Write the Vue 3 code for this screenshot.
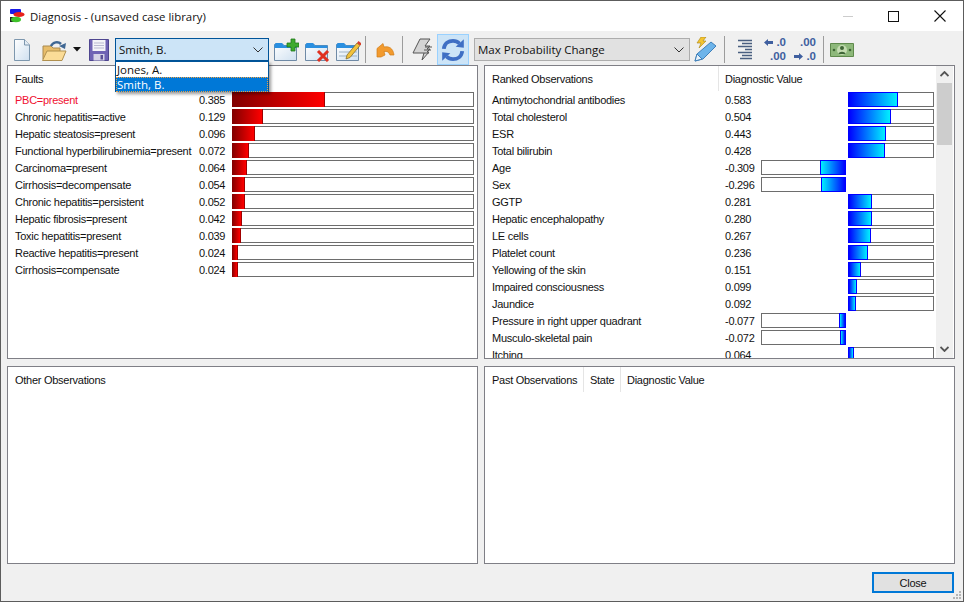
<script setup>
const faults = [
  { name: 'PBC=present', value: 0.385, hit: true },
  { name: 'Chronic hepatitis=active', value: 0.129 },
  { name: 'Hepatic steatosis=present', value: 0.096 },
  { name: 'Functional hyperbilirubinemia=present', value: 0.072 },
  { name: 'Carcinoma=present', value: 0.064 },
  { name: 'Cirrhosis=decompensate', value: 0.054 },
  { name: 'Chronic hepatitis=persistent', value: 0.052 },
  { name: 'Hepatic fibrosis=present', value: 0.042 },
  { name: 'Toxic hepatitis=present', value: 0.039 },
  { name: 'Reactive hepatitis=present', value: 0.024 },
  { name: 'Cirrhosis=compensate', value: 0.024 },
]

const ranked = [
  { name: 'Antimytochondrial antibodies', value: 0.583 },
  { name: 'Total cholesterol', value: 0.504 },
  { name: 'ESR', value: 0.443 },
  { name: 'Total bilirubin', value: 0.428 },
  { name: 'Age', value: -0.309 },
  { name: 'Sex', value: -0.296 },
  { name: 'GGTP', value: 0.281 },
  { name: 'Hepatic encephalopathy', value: 0.28 },
  { name: 'LE cells', value: 0.267 },
  { name: 'Platelet count', value: 0.236 },
  { name: 'Yellowing of the skin', value: 0.151 },
  { name: 'Impaired consciousness', value: 0.099 },
  { name: 'Jaundice', value: 0.092 },
  { name: 'Pressure in right upper quadrant', value: -0.077 },
  { name: 'Musculo-skeletal pain', value: -0.072 },
  { name: 'Itching', value: 0.064 },
]

const fmt = (v) => v.toFixed(3)
const px = (v, full) => Math.round(Math.abs(v) * full) + 'px'
</script>

<template>
  <div class="window">
    <div class="titlebar">
      <svg class="appicon" width="16" height="15" viewBox="0 0 16 15">
        <path d="M1 8h8v5H1z" fill="#222" />
        <rect x="1" y="0" width="11" height="5" rx="1" fill="#1a1ae6" />
        <ellipse cx="10" cy="5.500" rx="5.500" ry="2.500" fill="#e8201c" />
        <ellipse cx="7" cy="10.500" rx="5" ry="2.800" fill="#3fc22a" />
      </svg>
      <span class="title">Diagnosis - (unsaved case library)</span>
      <div class="winbtns">
        <span class="winmin"></span>
        <span class="winmax"></span>
        <svg width="12" height="12" viewBox="0 0 12 12"><path d="M.5.500l11 11M11.500.500l-11 11" stroke="#111" stroke-width="1.100" fill="none" /></svg>
      </div>
    </div>

    <div class="toolbar">
      <svg class="i-new" width="20" height="24" viewBox="0 0 20 24">
        <defs><linearGradient id="paper" x1="0" y1="0" x2="1" y2="1"><stop offset="0" stop-color="#fff" /><stop offset="1" stop-color="#cfe0f0" /></linearGradient></defs>
        <path d="M2.500 1.500h10l5 5.500v15.500h-15z" fill="url(#paper)" stroke="#7d97ae" />
        <path d="M12.500 1.500v5.500h5" fill="#e4edf5" stroke="#7d97ae" />
      </svg>
      <svg class="i-open" width="26" height="24" viewBox="0 0 26 24">
        <path d="M2 8h8l2 2h7v11H2z" fill="#e8bd6a" stroke="#a98a4e" />
        <path d="M6 13h19l-4 9.500H1.500z" fill="#fbdc97" stroke="#b0904f" />
        <path d="M10 8c2-4 7-5 10-2" fill="none" stroke="#3f6793" stroke-width="2.500" />
        <path d="M18 8l7-3-1 6z" fill="#3f6793" />
      </svg>
      <svg class="i-drop" width="8" height="5" viewBox="0 0 8 5"><path d="M0 0h8L4 4.500z" fill="#111" /></svg>
      <svg class="i-save" width="22" height="24" viewBox="0 0 22 24">
        <path d="M1.500 1.500h19v21h-19z" fill="#6f63b4" stroke="#4f4690" />
        <path d="M4.500 2h13v11h-13z" fill="#f4f4f8" />
        <path d="M6 5h10M6 7.500h10M6 10h10" stroke="#b9b9d0" />
        <path d="M5.500 16h11v6.500h-11z" fill="#d5d3e6" />
        <path d="M12.500 17h2.500v4.500h-2.500z" fill="#5a5096" />
      </svg>

      <div class="combo combo-name">
        <span>Smith, B.</span>
        <svg width="10" height="6" viewBox="0 0 10 6"><path d="M.5.500L5 5 9.500.5" fill="none" stroke="#333" /></svg>
        <div class="menu">
          <div class="opt">Jones, A.</div>
          <div class="opt sel">Smith, B.</div>
        </div>
      </div>

      <svg class="i-add" width="26" height="24" viewBox="0 0 26 24">
        <path d="M1.500 6.500v16h22v-15H11l-2-2H3z" fill="url(#paper)" stroke="#6f8aa6" />
        <path d="M1.500 10V6.500l1.500-1.500h6l2 2.500h12.500V10z" fill="#2a8fe0" />
        <path d="M18 1h4v4h4v4h-4v4h-4V9h-4V5h4z" fill="#3eaa2e" stroke="#1f7a1b" stroke-width=".8" />
      </svg>
      <svg class="i-del" width="26" height="24" viewBox="0 0 26 24">
        <path d="M1.500 6.500v16h22v-15H11l-2-2H3z" fill="url(#paper)" stroke="#6f8aa6" />
        <path d="M1.500 10V6.500l1.500-1.500h6l2 2.500h12.500V10z" fill="#2a8fe0" />
        <path d="M14 13l10 10M24 13L14 23" stroke="#e03020" stroke-width="3" fill="none" />
      </svg>
      <svg class="i-edit" width="26" height="24" viewBox="0 0 26 24">
        <path d="M1.500 6.500v16h22v-15H11l-2-2H3z" fill="url(#paper)" stroke="#6f8aa6" />
        <path d="M1.500 10V6.500l1.500-1.500h6l2 2.500h12.500V10z" fill="#2a8fe0" />
        <path d="M4 14h18M4 18h18" stroke="#9fb3c6" />
        <path d="M12 17l10-12 3 2.500-10 12-4 1.500z" fill="#f2c23c" stroke="#7a6320" stroke-width=".7" />
        <path d="M22 5l1.500-2 3 2.500-1.500 2z" fill="#d8402c" />
      </svg>
      <span class="sep sep-a"></span>
      <svg class="i-undo" width="20" height="18" viewBox="0 0 20 18">
        <path d="M2 16V7.500l6-5 1 3.500c5-1 9 1 10 8h-4c-1-3-3-4-6-3.500l1 3.500L6 16z" fill="#f29a2e" stroke="#d07c18" stroke-width=".7" />
      </svg>
      <span class="sep sep-b"></span>
      <svg class="i-bolt" width="24" height="24" viewBox="0 0 24 24">
        <path d="M10 1h10l-5 7h5l-3 3h3l-3 3h2l-7 8 2-7H3z" fill="#d4d4d4" stroke="#555" />
        <path d="M15 9h7M14 12h7M14 15h5" stroke="#555" />
      </svg>
      <div class="toggle">
        <svg width="26" height="26" viewBox="0 0 24 24">
          <path d="M3.500 11C4 6 8 3.500 12 3.500c2.500 0 4.500 1 6 2.500" fill="none" stroke="#3f6fc4" stroke-width="3.500" />
          <path d="M14.500 9l7.500 1V2z" fill="#3f6fc4" />
          <path d="M20.500 13C20 18 16 20.500 12 20.500c-2.500 0-4.500-1-6-2.500" fill="none" stroke="#3f6fc4" stroke-width="3.500" />
          <path d="M9.500 15L2 14v8z" fill="#3f6fc4" />
        </svg>
      </div>

      <div class="combo combo-mode">
        <span>Max Probability Change</span>
        <svg width="10" height="6" viewBox="0 0 10 6"><path d="M.5.500L5 5 9.500.5" fill="none" stroke="#333" /></svg>
      </div>

      <svg class="i-wand" width="26" height="26" viewBox="0 0 26 26">
        <path d="M2 24l2-7L18 5l5 4-13 13z" fill="#6db4ea" stroke="#3f7fb8" />
        <path d="M2 24l2-7 5 5z" fill="#e8f2fa" stroke="#3f7fb8" />
        <path d="M8 0h5l-3 4h3l-7 7 2-5H4z" fill="#f4c430" stroke="#a88418" stroke-width=".6" />
      </svg>
      <span class="sep sep-c"></span>
      <svg class="i-align" width="18" height="24" viewBox="0 0 18 24">
        <path d="M2 2.500h14M6 5.500h10M2 8.500h14M9 11.500h7M2 14.500h14M6 17.500h10M4 20.500h12" stroke="#4a5f80" stroke-width="1.600" />
      </svg>
      <div class="dec">
        <div class="dec-line">
          <svg class="dec-arrow" width="9" height="7" viewBox="0 0 9 7"><path d="M0 3.500L4 0v2h5v3H4v2z" fill="#3f5f9f" /></svg>
          <span>.0</span>
        </div>
        <div class="dec-line"><span>.00</span></div>
      </div>
      <div class="dec inc">
        <div class="dec-line"><span>.00</span></div>
        <div class="dec-line">
          <svg class="dec-arrow" width="9" height="7" viewBox="0 0 9 7"><path d="M9 3.500L5 0v2H0v3h5v2z" fill="#3f5f9f" /></svg>
          <span>.0</span>
        </div>
      </div>
      <span class="sep sep-d"></span>
      <svg class="i-money" width="24" height="14" viewBox="0 0 24 14">
        <path d="M.5.500h23v13H.5z" fill="#8db87a" stroke="#5f8a4c" />
        <circle cx="12" cy="7" r="5" fill="#c3dcb0" />
        <circle cx="12" cy="5" r="2" fill="#3f6636" />
        <path d="M8.500 11c.5-3 6.500-3 7 0z" fill="#3f6636" />
        <circle cx="4" cy="7" r="1.300" fill="#3f6636" />
        <circle cx="20" cy="7" r="1.300" fill="#3f6636" />
      </svg>
    </div>

    <div class="panels">
      <section class="panel">
        <header class="head"><span class="cell cell-faults">Faults</span></header>
        <div class="rows">
          <div v-for="f in faults" :key="f.name" class="fault">
            <span class="fname" :class="{ hit: f.hit }">{{ f.name }}</span>
            <span class="fvalue">{{ fmt(f.value) }}</span>
            <div class="bar fault-bar">
              <div class="fill red" :style="{ width: px(f.value, 241) }"></div>
              <div class="rest"></div>
            </div>
          </div>
        </div>
      </section>

      <section class="panel panel-scroll">
        <div class="listwrap">
          <header class="head">
            <span class="cell cell-ranked">Ranked Observations</span>
            <span class="cell cell-diag">Diagnostic Value</span>
          </header>
          <div class="rows">
            <div v-for="r in ranked" :key="r.name" class="obs">
              <span>{{ r.name }}</span>
              <span>{{ fmt(r.value) }}</span>
              <div class="bar neg">
                <template v-if="r.value < 0">
                  <div class="rest rest-left"></div>
                  <div class="fill cyan" :style="{ width: px(r.value, 85) }"></div>
                </template>
              </div>
              <div class="bar pos">
                <template v-if="r.value > 0">
                  <div class="fill blue" :style="{ width: px(r.value, 86) }"></div>
                  <div class="rest"></div>
                </template>
              </div>
            </div>
          </div>
        </div>
        <div class="scrollbar">
          <svg class="chev" width="9" height="6" viewBox="0 0 9 6"><path d="M.5 5L4.500 1l4 4" fill="none" stroke="#555" stroke-width="1.800" /></svg>
          <div class="thumb"></div>
          <svg class="chev chev-down" width="9" height="6" viewBox="0 0 9 6"><path d="M.5 1l4 4 4-4" fill="none" stroke="#555" stroke-width="1.800" /></svg>
        </div>
      </section>

      <section class="panel">
        <header class="head"><span class="cell cell-faults">Other Observations</span></header>
      </section>

      <section class="panel">
        <header class="head">
          <span class="cell cell-past">Past Observations</span>
          <span class="cell cell-state">State</span>
          <span class="cell">Diagnostic Value</span>
        </header>
      </section>
    </div>

    <div class="footer">
      <button class="close">Close</button>
      <svg class="grip" width="9" height="9" viewBox="0 0 9 9">
        <path d="M6 0h2v2H6zM3 3h2v2H3zM6 3h2v2H6zM0 6h2v2H0zM3 6h2v2H3zM6 6h2v2H6z" fill="#b5b5b5" />
      </svg>
    </div>
  </div>
</template>

<style>
html, body {
  margin: 0;
  background: #f0f0f0;
}
</style>

<style scoped>
.window {
  width: 964px;
  height: 602px;
  box-sizing: border-box;
  border: 1px solid #5c5c5c;
  background: #f0f0f0;
  font-family: "Liberation Sans", Arial, sans-serif;
  font-size: 11px;
  letter-spacing: -0.27px;
  color: #111;
  overflow: hidden;
  position: relative;
}

.titlebar {
  height: 30px;
  background: #fff;
  display: flex;
  align-items: center;
}
.appicon {
  margin-left: 8px;
}
.title {
  margin-left: 5px;
  font-family: "Open Sans", sans-serif;
  font-size: 11.4px;
  letter-spacing: 0;
  color: #111;
}
.winbtns {
  margin-left: auto;
  display: flex;
  align-items: center;
}
.winmin {
  width: 10px;
  height: 1px;
  background: #ccc;
  margin-right: 35px;
}
.winmax {
  width: 9px;
  height: 9px;
  border: 1px solid #111;
  margin-right: 35px;
}
.winbtns svg {
  margin-right: 17px;
}

.toolbar {
  height: 31px;
  padding-top: 3px;
  display: flex;
  align-items: center;
}
.toolbar svg {
  flex: none;
}
.i-new { margin-left: 11px; }
.i-open { margin-left: 9px; }
.i-drop { margin-left: 6px; }
.i-save { margin-left: 7px; }
.i-add { margin-left: 4px; }
.i-del { margin-left: 5px; }
.i-edit { margin-left: 5px; }
.i-undo { margin-left: 9px; }
.i-bolt { margin-left: 7px; }
.i-wand { margin-left: 3px; }
.i-align { margin-left: 11px; }
.i-money { margin-left: 6px; }

.sep {
  width: 1px;
  height: 27px;
  background: #9c9c9c;
}
.sep-a { margin-left: 4px; }
.sep-b { margin-left: 7px; }
.sep-c { margin-left: 5px; }
.sep-d { margin-left: 5px; }

.combo {
  box-sizing: border-box;
  height: 23px;
  display: flex;
  align-items: center;
  justify-content: space-between;
  padding: 0 5px 0 3px;
  font-family: "Open Sans", sans-serif;
  font-size: 11.5px;
  letter-spacing: 0;
  position: relative;
}
.combo-name {
  width: 154px;
  margin-left: 5px;
  background: #cce4f7;
  border: 1px solid #005499;
}
.combo-mode {
  width: 216px;
  margin-left: 5px;
  background: #e1e1e1;
  border: 1px solid #adadad;
}
.menu {
  position: absolute;
  left: -1px;
  top: 22px;
  width: 154px;
  height: 31px;
  box-sizing: border-box;
  background: #fff;
  border: 1px solid #005499;
  box-shadow: 2px 2px 3px rgba(0, 0, 0, 0.4);
  z-index: 5;
}
.opt {
  height: 15px;
  line-height: 15px;
  padding-left: 1px;
}
.sel {
  box-sizing: border-box;
  background: #0078d7;
  color: #fff;
  outline: 1px dotted #f0a040;
  outline-offset: -1px;
}

.toggle {
  box-sizing: border-box;
  width: 32px;
  height: 31px;
  margin-left: 3px;
  background: #cce4f7;
  border: 1px solid #99d1ff;
  display: flex;
  align-items: center;
  justify-content: center;
}

.dec {
  width: 28px;
  margin-left: 6px;
  display: flex;
  flex-direction: column;
  font-weight: bold;
  font-size: 11.5px;
  letter-spacing: 0;
  color: #3f5f9f;
}
.inc {
  margin-left: 2px;
}
.dec-line {
  height: 13.5px;
  line-height: 13.5px;
  display: flex;
  align-items: center;
  justify-content: flex-end;
  padding-right: 2px;
}
.dec-arrow {
  margin-right: 3px;
}

.panels {
  display: grid;
  margin-left: 6px;
  grid-template-columns: 471px 471px;
  grid-template-rows: 294px 198px;
  column-gap: 6px;
  row-gap: 7px;
}
.panel {
  box-sizing: border-box;
  background: #fff;
  border: 1px solid #7f7f86;
  overflow: hidden;
  min-width: 0;
}
.panel-scroll {
  display: flex;
}
.listwrap {
  flex: 1;
  min-width: 0;
}

.head {
  height: 25px;
  display: flex;
  align-items: center;
}
.cell {
  height: 100%;
  display: flex;
  align-items: center;
  padding-left: 6px;
  box-sizing: border-box;
}
.cell-faults {
  padding-left: 7px;
}
.cell-ranked {
  width: 234px;
  padding-left: 7px;
  border-right: 1px solid #e5e5e5;
}
.cell-diag {
  flex: 1;
}
.cell-past {
  width: 99px;
  padding-left: 7px;
  border-right: 1px solid #e5e5e5;
}
.cell-state {
  width: 37px;
  border-right: 1px solid #e5e5e5;
}

.fault {
  height: 17px;
  display: flex;
  align-items: center;
  padding-left: 7px;
}
.fname {
  width: 184px;
  white-space: nowrap;
}
.hit {
  color: #f01030;
}
.fvalue {
  width: 33px;
}
.bar {
  height: 15px;
  display: flex;
}
.fault-bar {
  width: 242px;
}
.fill {
  box-sizing: border-box;
  height: 15px;
  flex: none;
}
.red {
  background: linear-gradient(to right, #800000, #ff0000);
  border-right: 1px solid #a00000;
}
.blue {
  background: linear-gradient(to right, #0000ff, #00f0ff);
  border: 1px solid #0000ff;
}
.cyan {
  background: linear-gradient(to right, #00f0ff, #0000ff);
  border: 1px solid #0000ff;
}
.rest {
  flex: 1;
  box-sizing: border-box;
  border: 1px solid #6d6d6d;
  border-left: none;
}
.rest-left {
  border-left: 1px solid #6d6d6d;
  border-right: none;
}

.obs {
  height: 17px;
  display: grid;
  grid-template-columns: 233px 36px 85px 88px;
  align-items: center;
  padding-left: 7px;
  white-space: nowrap;
}
.pos {
  margin-left: 2px;
}

.scrollbar {
  width: 17px;
  margin-right: 1px;
  background: #f0f0f0;
  display: flex;
  flex-direction: column;
  align-items: center;
  flex: none;
}
.chev {
  margin-top: 5px;
  margin-bottom: 6px;
}
.chev-down {
  margin-top: auto;
  margin-bottom: 6px;
}
.thumb {
  width: 15px;
  height: 62px;
  background: #cdcdcd;
}

.footer {
  height: 37px;
  display: flex;
  align-items: flex-start;
  justify-content: flex-end;
  padding: 8px 0 0;
  box-sizing: border-box;
  position: relative;
}
.close {
  box-sizing: border-box;
  width: 82px;
  height: 21px;
  margin-right: 9px;
  padding: 0;
  background: #e1e1e1;
  border: 2px solid #0078d7;
  font-family: "Liberation Sans", Arial, sans-serif;
  font-size: 11px;
  letter-spacing: -0.27px;
  color: #111;
}
.grip {
  position: absolute;
  right: 1px;
  bottom: 1px;
}
</style>
